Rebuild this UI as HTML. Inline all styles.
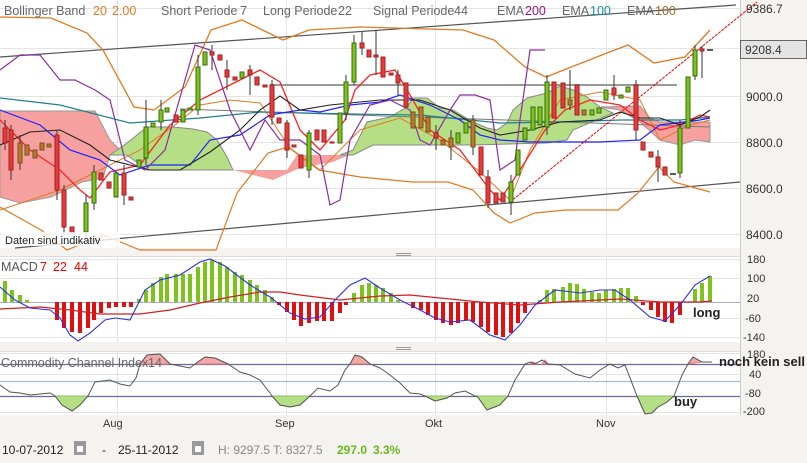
<!DOCTYPE html><html><head><meta charset="utf-8"><style>
body{margin:0;width:807px;height:463px;overflow:hidden;background:#f4f3ef;font-family:"Liberation Sans",sans-serif}
svg{position:absolute;left:0;top:0}
</style></head><body>
<svg width="807" height="463" viewBox="0 0 807 463" font-family="Liberation Sans, sans-serif">
<rect x="0" y="0" width="740" height="415" fill="#fff"/>
<rect x="740" y="0" width="67" height="415" fill="#f4f3ef"/>
<line x1="740.5" y1="0" x2="740.5" y2="415" stroke="#ccc"/>
<g stroke="#e4e4e4" stroke-width="1">
<line x1="0" y1="8.5" x2="740" y2="8.5"/><line x1="0" y1="48.5" x2="740" y2="48.5"/><line x1="0" y1="96.5" x2="740" y2="96.5"/><line x1="0" y1="142.5" x2="740" y2="142.5"/><line x1="0" y1="188.5" x2="740" y2="188.5"/><line x1="0" y1="234.5" x2="740" y2="234.5"/>
<line x1="117.5" y1="0" x2="117.5" y2="415"/><line x1="286.5" y1="0" x2="286.5" y2="415"/><line x1="435.5" y1="0" x2="435.5" y2="415"/><line x1="606.5" y1="0" x2="606.5" y2="415"/>
<line x1="0" y1="259.5" x2="740" y2="259.5"/><line x1="0" y1="278.5" x2="740" y2="278.5"/><line x1="0" y1="318.5" x2="740" y2="318.5"/><line x1="0" y1="337.5" x2="740" y2="337.5"/>
<line x1="0" y1="353.5" x2="740" y2="353.5"/><line x1="0" y1="374.5" x2="740" y2="374.5"/><line x1="0" y1="412.5" x2="740" y2="412.5"/>
</g>
<rect x="0" y="248" width="740" height="9" fill="#f4f3ef"/><line x1="0" y1="256.5" x2="740" y2="256.5" stroke="#ddd"/>
<rect x="0" y="342" width="740" height="10" fill="#f4f3ef"/><line x1="0" y1="351.5" x2="740" y2="351.5" stroke="#ddd"/>
<g stroke="#999"><line x1="396" y1="253.5" x2="411" y2="253.5"/><line x1="396" y1="255.5" x2="411" y2="255.5"/><line x1="396" y1="347.5" x2="411" y2="347.5"/><line x1="396" y1="349.5" x2="411" y2="349.5"/></g>

<polygon points="0,111 95,111 110,140 122,152 110,155 103,178 82,182 51,197 20,203 0,197" fill="#f7a0a0" stroke="#999" stroke-width="1"/>
<polygon points="110,155 127,143 147,127 173,127 193,129 207,132 217,140 227,157 233,170 147,170 127,155" fill="#b5de85" stroke="#888"/>
<polygon points="233,170 287,170 297,155 345,155 360,150 333,162 300,168 273,180" fill="#f7a0a0"/>
<polygon points="340,155 353,150 367,122 390,117 407,107 413,98 427,98 440,108 453,110 473,122 487,128 497,130 507,123 513,110 527,98 547,93 560,86 573,90 587,97 600,107 613,113 573,130 567,140 547,143 473,145 373,145 353,155" fill="#b5de85" stroke="#888"/>
<polygon points="600,107 640,106 650,118 660,122 710,122 710,142 695,140 680,145 660,140 640,122 620,110" fill="#f7a0a0" stroke="#999"/>

<line x1="0" y1="57" x2="736" y2="5" stroke="#555" stroke-width="1.2"/>
<line x1="15" y1="248" x2="740" y2="182" stroke="#555" stroke-width="1.2"/>
<line x1="270" y1="85" x2="677" y2="85" stroke="#999" stroke-width="2"/>
<line x1="180" y1="109" x2="710" y2="127" stroke="#777" stroke-width="1"/>
<line x1="510" y1="202" x2="757" y2="2" stroke="#e00" stroke-width="1" stroke-dasharray="3,1"/>

<polyline fill="none" stroke="#e07a20" stroke-width="1.3" points="0,17 51,18 87,33 103,50 134,107 154,110 185,87 211,30 242,20 283,40 309,30 360,27 463,30 494,40 525,67 546,77 607,53 628,45 654,63 685,57 710,30"/>
<polyline fill="none" stroke="#e07a20" stroke-width="1.2" points="0,207 41,230 67,250 103,235 140,250 216,250 237,193 268,153 288,147 319,170 360,177 412,182 448,182 473,190 494,213 510,223 535,213 566,210 618,210 638,193 659,167 674,182 710,192"/>
<polyline fill="none" stroke="#e07a20" stroke-width="1" points="0,210 60,190 100,170 140,150 175,125 200,105 230,100 260,103 290,148 320,170 360,130 400,118 440,140 480,172 510,200 530,150 560,100 600,92 640,100 660,140 690,125 710,120"/>
<polyline fill="none" stroke="#207f8f" stroke-width="1.2" points="0,98 60,105 130,123 200,118 260,112 350,114 420,115 500,123 560,122 620,120 680,120 710,117"/>
<polyline fill="none" stroke="#f22" stroke-width="1.3" points="0,120 30,150 60,170 80,190 90,198 110,172 140,165 170,125 200,100 230,85 260,70 280,82 300,130 320,150 345,120 355,90 370,75 395,70 410,95 430,130 460,150 490,190 500,200 520,170 545,130 565,110 590,100 620,105 640,120 660,130 680,125 700,115 710,117"/>
<polyline fill="none" stroke="#22f" stroke-width="1.2" points="0,110 40,125 70,150 100,160 120,175 150,165 190,165 210,140 240,135 270,115 300,110 320,112 350,105 380,102 400,95 430,105 460,120 480,135 500,140 530,142 600,142 640,140 660,125 700,120 710,118"/>
<polyline fill="none" stroke="#222" stroke-width="1.1" points="0,145 30,132 60,130 90,145 110,160 130,165 150,170 180,170 210,152 240,130 260,110 280,96 300,110 330,105 380,100 420,100 450,110 480,128 500,135 530,130 560,122 600,120 620,112 640,118 660,118 680,125 700,117 710,110"/>
<polyline fill="none" stroke="#8b2fa0" stroke-width="1.2" points="0,70 20,55 40,55 60,80 75,80 95,90 110,100 125,160 145,170 165,150 185,80 195,45 210,50 230,110 250,150 265,120 280,140 300,140 320,155 330,205 340,200 350,140 370,105 390,100 410,110 420,140 430,145 450,110 460,95 475,95 490,100 500,170 515,160 520,120 530,50 545,50"/>

<g stroke-width="1">
<g stroke="#333">
<line x1="5" y1="120" x2="5" y2="150"/><line x1="11" y1="125" x2="11" y2="180"/><line x1="20" y1="135" x2="20" y2="170"/><line x1="57" y1="130" x2="57" y2="200"/><line x1="64" y1="185" x2="64" y2="235"/><line x1="86" y1="195" x2="86" y2="238"/><line x1="94" y1="165" x2="94" y2="210"/><line x1="124" y1="165" x2="124" y2="205"/><line x1="146" y1="100" x2="146" y2="165"/><line x1="161" y1="100" x2="161" y2="130"/><line x1="198" y1="55" x2="198" y2="115"/><line x1="212" y1="45" x2="212" y2="70"/><line x1="227" y1="60" x2="227" y2="90"/><line x1="250" y1="65" x2="250" y2="95"/><line x1="272" y1="80" x2="272" y2="125"/><line x1="287" y1="120" x2="287" y2="158"/><line x1="309" y1="130" x2="309" y2="178"/><line x1="346" y1="75" x2="346" y2="120"/><line x1="354" y1="35" x2="354" y2="85"/><line x1="362" y1="32" x2="362" y2="55"/><line x1="376" y1="30" x2="376" y2="75"/><line x1="398" y1="70" x2="398" y2="95"/><line x1="436" y1="125" x2="436" y2="150"/><line x1="451" y1="130" x2="451" y2="160"/><line x1="473" y1="115" x2="473" y2="155"/><line x1="488" y1="170" x2="488" y2="208"/><line x1="511" y1="175" x2="511" y2="215"/><line x1="547" y1="75" x2="547" y2="135"/><line x1="570" y1="70" x2="570" y2="110"/><line x1="614" y1="75" x2="614" y2="100"/><line x1="636" y1="80" x2="636" y2="140"/><line x1="658" y1="150" x2="658" y2="182"/><line x1="680" y1="120" x2="680" y2="178"/><line x1="695" y1="45" x2="695" y2="80"/><line x1="702" y1="46" x2="702" y2="78"/>
</g>
<g fill="#e63b3b" stroke="#a02020">
<rect x="3" y="128" width="4" height="15"/><rect x="9" y="130" width="4" height="40"/><rect x="55" y="135" width="4" height="55"/><rect x="62" y="190" width="4" height="37"/><rect x="70" y="227" width="4" height="6"/><rect x="99" y="173" width="4" height="7"/><rect x="107" y="182" width="4" height="6"/><rect x="122" y="173" width="4" height="22"/><rect x="129" y="197" width="4" height="3"/><rect x="174" y="115" width="4" height="7"/><rect x="210" y="52" width="4" height="3"/><rect x="218" y="55" width="4" height="5"/><rect x="225" y="70" width="4" height="7"/><rect x="233" y="77" width="4" height="3"/><rect x="248" y="70" width="4" height="5"/><rect x="255" y="77" width="4" height="8"/><rect x="263" y="85" width="4" height="2"/><rect x="270" y="85" width="4" height="32"/><rect x="277" y="118" width="4" height="5"/><rect x="285" y="123" width="4" height="27"/><rect x="292" y="145" width="4" height="2"/><rect x="299" y="155" width="4" height="13"/><rect x="315" y="130" width="4" height="10"/><rect x="322" y="130" width="4" height="12"/><rect x="330" y="142" width="4" height="1"/><rect x="360" y="43" width="4" height="5"/><rect x="367" y="50" width="4" height="7"/><rect x="374" y="55" width="4" height="2"/><rect x="381" y="57" width="4" height="20"/><rect x="389" y="73" width="4" height="2"/><rect x="396" y="75" width="4" height="8"/><rect x="404" y="83" width="4" height="24"/><rect x="434" y="133" width="4" height="5"/><rect x="479" y="147" width="4" height="28"/><rect x="486" y="177" width="4" height="26"/><rect x="494" y="193" width="4" height="10"/><rect x="501" y="193" width="4" height="9"/><rect x="552" y="82" width="4" height="36"/><rect x="561" y="83" width="4" height="25"/><rect x="575" y="85" width="4" height="30"/><rect x="612" y="88" width="4" height="7"/><rect x="634" y="85" width="4" height="45"/><rect x="641" y="142" width="4" height="8"/><rect x="649" y="152" width="4" height="5"/><rect x="656" y="157" width="4" height="10"/><rect x="663" y="167" width="4" height="8"/><rect x="700" y="49" width="4" height="2"/>
</g>
<g fill="#b87a2a" stroke="#7a5020">
<rect x="18" y="143" width="4" height="20"/><rect x="25" y="145" width="4" height="10"/><rect x="33" y="150" width="4" height="8"/><rect x="40" y="143" width="4" height="7"/><rect x="47" y="144" width="4" height="3"/><rect x="411" y="112" width="4" height="16"/><rect x="419" y="107" width="4" height="21"/><rect x="426" y="117" width="4" height="15"/><rect x="441" y="140" width="4" height="5"/><rect x="449" y="138" width="4" height="9"/><rect x="471" y="120" width="4" height="27"/><rect x="568" y="100" width="4" height="5"/><rect x="582" y="110" width="4" height="5"/>
</g>
<g fill="#7cc41c" stroke="#3a6a10">
<rect x="84" y="203" width="4" height="29"/><rect x="92" y="172" width="4" height="31"/><rect x="114" y="173" width="4" height="24"/><rect x="137" y="160" width="4" height="7"/><rect x="144" y="127" width="4" height="31"/><rect x="151" y="123" width="4" height="4"/><rect x="159" y="110" width="4" height="12"/><rect x="165" y="108" width="4" height="4"/><rect x="181" y="110" width="4" height="12"/><rect x="188" y="108" width="4" height="2"/><rect x="196" y="67" width="4" height="43"/><rect x="203" y="52" width="4" height="13"/><rect x="240" y="72" width="4" height="6"/><rect x="307" y="133" width="4" height="37"/><rect x="338" y="113" width="4" height="30"/><rect x="344" y="82" width="4" height="31"/><rect x="352" y="43" width="4" height="39"/><rect x="456" y="133" width="4" height="10"/><rect x="464" y="123" width="4" height="10"/><rect x="509" y="182" width="4" height="20"/><rect x="516" y="150" width="4" height="25"/><rect x="523" y="128" width="4" height="12"/><rect x="531" y="107" width="4" height="23"/><rect x="538" y="107" width="4" height="18"/><rect x="545" y="82" width="4" height="45"/><rect x="590" y="110" width="4" height="5"/><rect x="597" y="108" width="4" height="5"/><rect x="604" y="90" width="4" height="10"/><rect x="619" y="95" width="4" height="3"/><rect x="626" y="87" width="4" height="5"/><rect x="678" y="128" width="4" height="45"/><rect x="686" y="77" width="4" height="51"/><rect x="693" y="50" width="4" height="26"/>
</g>
<g stroke="#222" stroke-width="1.5"><line x1="670" y1="174" x2="676" y2="174"/><line x1="707" y1="50" x2="713" y2="50"/></g>
</g>

<line x1="0" y1="302.5" x2="740" y2="302.5" stroke="#aac" stroke-width="1"/>
<g fill="#7cc41c">
<rect x="3" y="281" width="4" height="21"/><rect x="10" y="290" width="4" height="12"/><rect x="18" y="295" width="4" height="7"/><rect x="25" y="300" width="4" height="2"/>
<rect x="137" y="299" width="4" height="3"/><rect x="144" y="290" width="4" height="12"/><rect x="151" y="283" width="4" height="19"/><rect x="159" y="277" width="4" height="25"/><rect x="165" y="274" width="4" height="28"/><rect x="174" y="274" width="4" height="28"/><rect x="181" y="274" width="4" height="28"/><rect x="188" y="274" width="4" height="28"/><rect x="196" y="267" width="4" height="35"/><rect x="203" y="262" width="4" height="40"/><rect x="210" y="260" width="4" height="42"/><rect x="218" y="262" width="4" height="40"/><rect x="225" y="267" width="4" height="35"/><rect x="233" y="272" width="4" height="30"/><rect x="240" y="275" width="4" height="27"/><rect x="248" y="280" width="4" height="22"/><rect x="255" y="285" width="4" height="17"/><rect x="263" y="290" width="4" height="12"/><rect x="270" y="297" width="4" height="5"/>
<rect x="352" y="293" width="4" height="9"/><rect x="360" y="285" width="4" height="17"/><rect x="367" y="283" width="4" height="19"/><rect x="374" y="285" width="4" height="17"/><rect x="381" y="288" width="4" height="14"/><rect x="389" y="293" width="4" height="9"/><rect x="396" y="300" width="4" height="2"/>
<rect x="538" y="300" width="4" height="2"/><rect x="545" y="290" width="4" height="12"/><rect x="552" y="289" width="4" height="13"/><rect x="561" y="287" width="4" height="15"/><rect x="568" y="283" width="4" height="19"/><rect x="575" y="284" width="4" height="18"/><rect x="582" y="289" width="4" height="13"/><rect x="590" y="292" width="4" height="10"/><rect x="597" y="293" width="4" height="9"/><rect x="604" y="290" width="4" height="12"/><rect x="612" y="289" width="4" height="13"/><rect x="619" y="288" width="4" height="14"/><rect x="626" y="288" width="4" height="14"/><rect x="634" y="296" width="4" height="6"/>
<rect x="693" y="289" width="4" height="13"/><rect x="700" y="283" width="4" height="19"/><rect x="708" y="276" width="4" height="26"/>
</g>
<g fill="#e01010">
<rect x="55" y="302" width="4" height="18"/><rect x="62" y="302" width="4" height="26"/><rect x="70" y="302" width="4" height="30"/><rect x="78" y="302" width="4" height="31"/><rect x="86" y="302" width="4" height="26"/><rect x="92" y="302" width="4" height="18"/><rect x="99" y="302" width="4" height="11"/><rect x="107" y="302" width="4" height="6"/><rect x="114" y="302" width="4" height="5"/><rect x="122" y="302" width="4" height="5"/><rect x="129" y="302" width="4" height="5"/>
<rect x="277" y="302" width="4" height="3"/><rect x="285" y="302" width="4" height="10"/><rect x="292" y="302" width="4" height="18"/><rect x="299" y="302" width="4" height="24"/><rect x="307" y="302" width="4" height="21"/><rect x="315" y="302" width="4" height="19"/><rect x="322" y="302" width="4" height="19"/><rect x="330" y="302" width="4" height="19"/><rect x="338" y="302" width="4" height="11"/><rect x="344" y="302" width="4" height="3"/>
<rect x="411" y="302" width="4" height="6"/><rect x="419" y="302" width="4" height="8"/><rect x="426" y="302" width="4" height="13"/><rect x="434" y="302" width="4" height="18"/><rect x="441" y="302" width="4" height="21"/><rect x="449" y="302" width="4" height="23"/><rect x="456" y="302" width="4" height="21"/><rect x="464" y="302" width="4" height="18"/><rect x="471" y="302" width="4" height="20"/><rect x="479" y="302" width="4" height="25"/><rect x="486" y="302" width="4" height="30"/><rect x="494" y="302" width="4" height="33"/><rect x="501" y="302" width="4" height="35"/><rect x="509" y="302" width="4" height="31"/><rect x="516" y="302" width="4" height="21"/><rect x="523" y="302" width="4" height="11"/>
<rect x="641" y="302" width="4" height="3"/><rect x="649" y="302" width="4" height="8"/><rect x="656" y="302" width="4" height="15"/><rect x="663" y="302" width="4" height="20"/><rect x="670" y="302" width="4" height="21"/><rect x="678" y="302" width="4" height="13"/>
</g>
<polyline fill="none" stroke="#d02020" stroke-width="1.2" points="0,309 40,307 70,310 100,314 140,314 170,310 200,303 230,297 260,292 280,292 300,295 340,300 380,296 410,295 440,298 480,302 520,305 560,302 620,299 660,302 700,302 712,301"/>
<polyline fill="none" stroke="#3030e0" stroke-width="1.1" points="0,287 15,300 30,308 50,310 60,318 70,335 78,341 90,333 105,320 115,318 130,320 145,290 160,280 180,275 200,262 210,259 225,266 250,285 270,297 290,313 305,319 320,317 335,300 350,285 365,278 380,288 400,300 420,310 435,318 450,322 470,320 490,335 505,340 520,325 535,305 555,290 580,293 600,290 615,290 630,300 650,317 665,321 680,305 695,285 710,276"/>

<g stroke-width="1.2"><line x1="0" y1="364.5" x2="740" y2="364.5" stroke="#6a6a9a"/><line x1="0" y1="381.5" x2="740" y2="381.5" stroke="#aac0d0"/><line x1="0" y1="396.5" x2="740" y2="396.5" stroke="#6a6a9a"/></g>
<path d="M55,396 L62,405 L72,411 L80,405 L88,396Z M272,396 L280,405 L290,407 L300,405 L310,396Z M425,396 L435,401 L447,398 L450,396Z M477,396 L487,410 L500,405 L508,396Z M637,396 L645,414 L652,413 L658,407 L667,402 L674,396Z" fill="#b5de85" stroke="#8bc060"/>
<path d="M140,364 L147,355 L160,354 L170,364Z M195,364 L205,357 L215,358 L228,364Z M350,364 L355,355 L362,357 L370,364Z M530,364 L532,362 L538,364Z M542,364 L545,360 L548,364Z M688,364 L693,357 L702,362Z" fill="#f0a8a8" stroke="#e08080"/>
<polyline fill="none" stroke="#555" stroke-width="1" points="0,385 10,392 20,393 30,395 40,394 50,393 55,396 62,405 72,411 80,405 88,396 95,382 110,380 120,384 130,386 136,378 140,364 147,355 160,354 170,364 180,366 190,368 195,364 205,357 215,358 228,364 240,372 250,375 260,380 270,393 272,396 280,405 290,407 300,405 310,396 318,388 330,391 338,385 345,370 350,364 355,355 362,357 370,364 380,368 390,375 400,383 410,393 420,394 425,396 435,401 447,398 455,393 465,391 475,396 477,396 487,410 500,405 508,396 515,380 525,364 530,362 535,364 542,360 548,364 560,365 575,374 590,378 600,370 610,364 618,368 625,365 637,396 645,414 652,413 658,407 667,402 674,396 682,375 688,364 693,357 702,362 712,362"/>

<g font-size="12" fill="#333">
<text x="746" y="13">9386.7</text>
<rect x="740.5" y="40.5" width="66" height="18" fill="#e4e4e4" stroke="#666"/>
<text x="745" y="54">9208.4</text>
<text x="746" y="101">9000.0</text><text x="746" y="147">8800.0</text><text x="746" y="193">8600.0</text><text x="746" y="239">8400.0</text>
</g>
<g font-size="11" fill="#333">
<text x="747" y="263">180</text><text x="747" y="282">100</text><text x="747" y="302">20</text><text x="745" y="322">-60</text><text x="743" y="341">-140</text>
<text x="747" y="358">180</text><text x="749" y="378">40</text><text x="745" y="397">-80</text><text x="743" y="415">-200</text>
<text x="103" y="427">Aug</text><text x="275" y="427">Sep</text><text x="425" y="427">Okt</text><text x="596" y="427">Nov</text>
</g>
<g font-size="12.5" fill="#666">
<text x="4" y="15">Bollinger Band</text><text x="93" y="15" fill="#e07a20">20</text><text x="112" y="15" fill="#e07a20">2.00</text>
<text x="161" y="15">Short Periode</text><text x="240" y="15">7</text>
<text x="263" y="15">Long Periode</text><text x="338" y="15">22</text>
<text x="373" y="15">Signal Periode</text><text x="454" y="15">44</text>
<text x="497" y="15">EMA</text><text x="525" y="15" fill="#a0107a">200</text>
<text x="562" y="15">EMA</text><text x="590" y="15" fill="#1a8fa0">100</text>
<text x="627" y="15">EMA</text><text x="655" y="15" fill="#9a7030">100</text>
<text x="1" y="271" fill="#555">MACD</text><text x="40" y="271" fill="#e00">7</text><text x="53" y="271" fill="#e00">22</text><text x="74" y="271" fill="#e00">44</text>
<text x="1" y="367" fill="#666">Commodity Channel Index</text><text x="148" y="367" fill="#666">14</text>
</g>
<rect x="2" y="232" width="118" height="14" fill="#fff" opacity="0.8"/>
<text x="5" y="244" font-size="11" fill="#222">Daten sind indikativ</text>
<g font-size="13" font-weight="bold" fill="#222">
<text x="693" y="317">long</text><text x="719" y="366">noch kein sell</text><text x="674" y="406">buy</text>
</g>
<g font-size="12">
<text x="2" y="454" fill="#222">10-07-2012</text>
<rect x="74" y="441" width="12" height="14" fill="#999"/><rect x="77" y="446" width="6" height="6" fill="#fff"/>
<text x="102" y="454" fill="#222">-</text>
<text x="118" y="454" fill="#222">25-11-2012</text>
<rect x="192" y="441" width="12" height="14" fill="#999"/><rect x="195" y="446" width="6" height="6" fill="#fff"/>
<text x="218" y="454" fill="#888">H: 9297.5  T: 8327.5</text>
<text x="337" y="454" fill="#6ab820" font-weight="bold">297.0</text>
<text x="373" y="454" fill="#6ab820" font-weight="bold">3.3%</text>
</g>
</svg>
</body></html>
